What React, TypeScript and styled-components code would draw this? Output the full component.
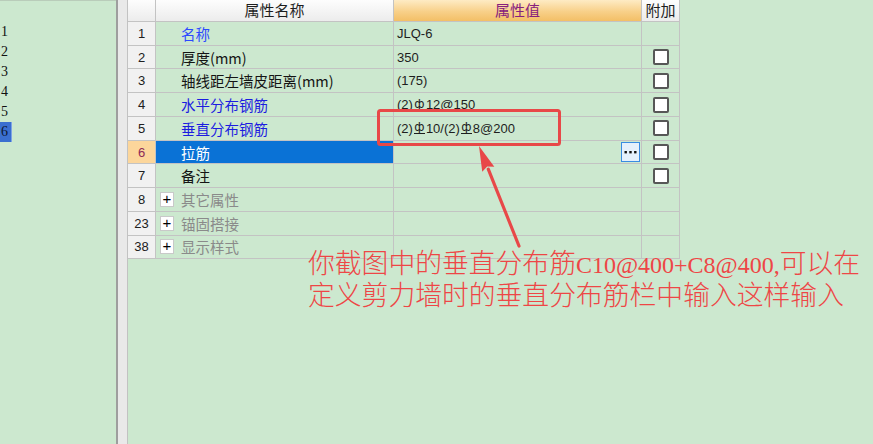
import React from 'react';
import styled, { createGlobalStyle, css } from 'styled-components';

const GREEN = '#cce8cf';
const LINE = '#c3c3c3';

const Global = createGlobalStyle`
  html, body { margin: 0; padding: 0; }
  body {
    background: ${GREEN};
    font-family: "Noto Sans CJK SC", "Liberation Sans", sans-serif;
    overflow: hidden;
  }
`;

const Page = styled.div`
  position: relative;
  display: flex;
  width: 873px;
  height: 444px;
  background: ${GREEN};
  overflow: hidden;
`;

const SidePanel = styled.div`
  flex: none;
  width: 116px;
  box-sizing: border-box;
  padding-top: 21px;
  border-top: 1px solid #b9ccba;
  overflow: hidden;
`;

const SideItem = styled.div<{ $active?: boolean }>`
  width: fit-content;
  height: 20px;
  padding-left: 1px;
  padding-right: 3px;
  box-sizing: border-box;
  font-family: "Liberation Serif", serif;
  font-size: 14px;
  line-height: 20px;
  color: #111;
  ${(p) =>
    p.$active &&
    css`
      background: #3a6fd0;
      border-right: 1px solid #7fa3e4;
      color: #0c1730;
    `}
`;

const Splitter = styled.div`
  flex: none;
  width: 12px;
  box-sizing: border-box;
  border-left: 2px solid #9e9e9e;
  border-right: 1px solid #c2c2c2;
  background: #e9e9e9;
`;

const GridArea = styled.div`
  flex: 1;
  display: flex;
  flex-direction: column;
`;

const PropGrid = styled.div`
  display: grid;
  grid-template-columns: 28px 238px 248px 38px;
  grid-template-rows: 22px repeat(10, 23.74px);
  width: max-content;
`;

const cellBase = css`
  box-sizing: border-box;
  border-right: 1px solid ${LINE};
  border-bottom: 1px solid ${LINE};
  display: flex;
  align-items: center;
  min-width: 0;
  overflow: hidden;
  white-space: nowrap;
`;

const HeaderCell = styled.div<{ $accent?: boolean }>`
  ${cellBase};
  justify-content: center;
  padding-bottom: 3px;
  font-size: 15px;
  color: ${(p) => (p.$accent ? '#86207e' : '#1e1e1e')};
  background: ${(p) =>
    p.$accent
      ? 'linear-gradient(to bottom, #feebc4 0%, #f8d089 55%, #f3bf66 100%)'
      : 'linear-gradient(to bottom, #fdfdfd, #ececec)'};
`;

const NumCell = styled.div<{ $active?: boolean }>`
  ${cellBase};
  justify-content: center;
  font-family: "Liberation Sans", sans-serif;
  font-size: 13px;
  color: ${(p) => (p.$active ? '#8d2b57' : '#202020')};
  background: ${(p) => (p.$active ? '#fcd69b' : '#f1f1f1')};
`;

type Tone = 'bright' | 'blue' | 'black' | 'gray';
const toneColor: Record<Tone, string> = {
  bright: '#2c48ff',
  blue: '#1c1ce0',
  black: '#141414',
  gray: '#8a8a8a',
};

const NameCell = styled.div<{ $tone: Tone; $selected?: boolean; $expand?: boolean }>`
  ${cellBase};
  padding-left: ${(p) => (p.$expand ? '4px' : '25px')};
  font-size: 14.5px;
  color: ${(p) => (p.$selected ? '#ffffff' : toneColor[p.$tone])};
  background: ${(p) => (p.$selected ? '#0a72d6' : 'transparent')};
`;

const ExpandBox = styled.span`
  flex: none;
  width: 14px;
  height: 15px;
  box-sizing: border-box;
  margin-right: 7px;
  border: 1px solid #c9c9c9;
  background: #fff;
  color: #000;
  font-family: "Liberation Sans", sans-serif;
  font-size: 15px;
  line-height: 12px;
  text-align: center;
`;

const ValueCell = styled.div`
  ${cellBase};
  padding-left: 3px;
  padding-right: 1px;
  font-family: "Liberation Sans", sans-serif;
  font-size: 13px;
  color: #1e1e1e;
`;

const Rebar = styled.span`
  display: inline-block;
  width: 11px;
  margin: 0 1px;
  text-align: center;
  font-family: "DejaVu Sans", sans-serif;
  font-size: 12px;
  line-height: 11px;
  border-bottom: 1px solid #1e1e1e;
`;

const EllipsisButton = styled.button`
  margin-left: auto;
  width: 19px;
  height: 20px;
  padding: 0;
  box-sizing: border-box;
  border: 1px solid #3a8ce2;
  background: #e5f0fc;
  display: flex;
  align-items: center;
  justify-content: center;
`;

const AddCell = styled.div`
  ${cellBase};
  justify-content: center;
`;

const CheckBox = styled.span`
  width: 16px;
  height: 16px;
  box-sizing: border-box;
  border: 2px solid #575757;
  border-radius: 2px;
  background: #fff;
  margin-left: 1px;
`;

const Overlay = styled.svg`
  position: absolute;
  left: 0;
  top: 0;
  pointer-events: none;
`;

const Note = styled.div`
  position: absolute;
  left: 308px;
  top: 249px;
  font-family: "Liberation Serif", "Noto Sans CJK SC", serif;
  font-size: 26.8px;
  font-weight: 300;
  line-height: 31px;
  color: #ee4646;
  white-space: nowrap;
  pointer-events: none;
`;

const NoteLatin = styled.span`
  font-family: "Liberation Serif", serif;
  font-size: 24px;
`;

type Row = {
  n: string;
  name: string;
  tone: Tone;
  value?: string;
  check?: boolean;
  expand?: boolean;
  selected?: boolean;
  button?: boolean;
};

const rows: Row[] = [
  { n: '1', name: '名称', tone: 'bright', value: 'JLQ-6' },
  { n: '2', name: '厚度(mm)', tone: 'black', value: '350', check: true },
  { n: '3', name: '轴线距左墙皮距离(mm)', tone: 'black', value: '(175)', check: true },
  { n: '4', name: '水平分布钢筋', tone: 'blue', value: '(2)§12@150', check: true },
  { n: '5', name: '垂直分布钢筋', tone: 'blue', value: '(2)§10/(2)§8@200', check: true },
  { n: '6', name: '拉筋', tone: 'black', selected: true, button: true, check: true },
  { n: '7', name: '备注', tone: 'black', check: true },
  { n: '8', name: '其它属性', tone: 'gray', expand: true },
  { n: '23', name: '锚固搭接', tone: 'gray', expand: true },
  { n: '38', name: '显示样式', tone: 'gray', expand: true },
];

function renderValue(v?: string) {
  if (!v) return null;
  const parts = v.split('§');
  return parts.map((p, i) => (
    <React.Fragment key={i}>
      {i > 0 && <Rebar>ф</Rebar>}
      {p}
    </React.Fragment>
  ));
}

function Dots() {
  return (
    <svg width="13" height="4" viewBox="0 0 13 4">
      <rect x="0.5" y="1" width="2.4" height="2.4" fill="#111" />
      <rect x="5.3" y="1" width="2.4" height="2.4" fill="#111" />
      <rect x="10.1" y="1" width="2.4" height="2.4" fill="#111" />
    </svg>
  );
}

export default function App() {
  const tip = { x: 479, y: 146 };
  const tail = { x: 519, y: 246 };
  const dx = tail.x - tip.x;
  const dy = tail.y - tip.y;
  const len = Math.hypot(dx, dy);
  const ux = dx / len;
  const uy = dy / len;
  const headLen = 25;
  const half = 6.5;
  const bx = tip.x + ux * headLen;
  const by = tip.y + uy * headLen;
  const nx = -uy;
  const ny = ux;
  const head = `${tip.x},${tip.y} ${bx + nx * half},${by + ny * half} ${bx - ux * 3},${by - uy * 3} ${bx - nx * half},${by - ny * half}`;

  return (
    <Page>
      <Global />
      <SidePanel>
        {['1', '2', '3', '4', '5', '6'].map((s) => (
          <SideItem key={s} $active={s === '6'}>
            {s}
          </SideItem>
        ))}
      </SidePanel>
      <Splitter />
      <GridArea>
        <PropGrid>
          <HeaderCell />
          <HeaderCell>属性名称</HeaderCell>
          <HeaderCell $accent>属性值</HeaderCell>
          <HeaderCell>附加</HeaderCell>
          {rows.map((r) => (
            <React.Fragment key={r.n}>
              <NumCell $active={r.selected}>{r.n}</NumCell>
              <NameCell $tone={r.tone} $selected={r.selected} $expand={r.expand}>
                {r.expand && <ExpandBox>+</ExpandBox>}
                {r.name}
              </NameCell>
              <ValueCell>
                {renderValue(r.value)}
                {r.button && (
                  <EllipsisButton>
                    <Dots />
                  </EllipsisButton>
                )}
              </ValueCell>
              <AddCell>{r.check && <CheckBox />}</AddCell>
            </React.Fragment>
          ))}
        </PropGrid>
      </GridArea>

      <Overlay width="873" height="444" viewBox="0 0 873 444">
        <rect x="378.5" y="110.5" width="181" height="34" rx="2" fill="none" stroke="#e84848" strokeWidth="3" />
        <line x1={bx} y1={by} x2={tail.x} y2={tail.y} stroke="#e84848" strokeWidth="3.2" strokeLinecap="round" />
        <polygon points={head} fill="#e84848" />
      </Overlay>
      <Note>
        你截图中的垂直分布筋<NoteLatin>C10@400+C8@400,</NoteLatin>可以在
        <br />
        定义剪力墙时的垂直分布筋栏中输入这样输入
      </Note>
    </Page>
  );
}
